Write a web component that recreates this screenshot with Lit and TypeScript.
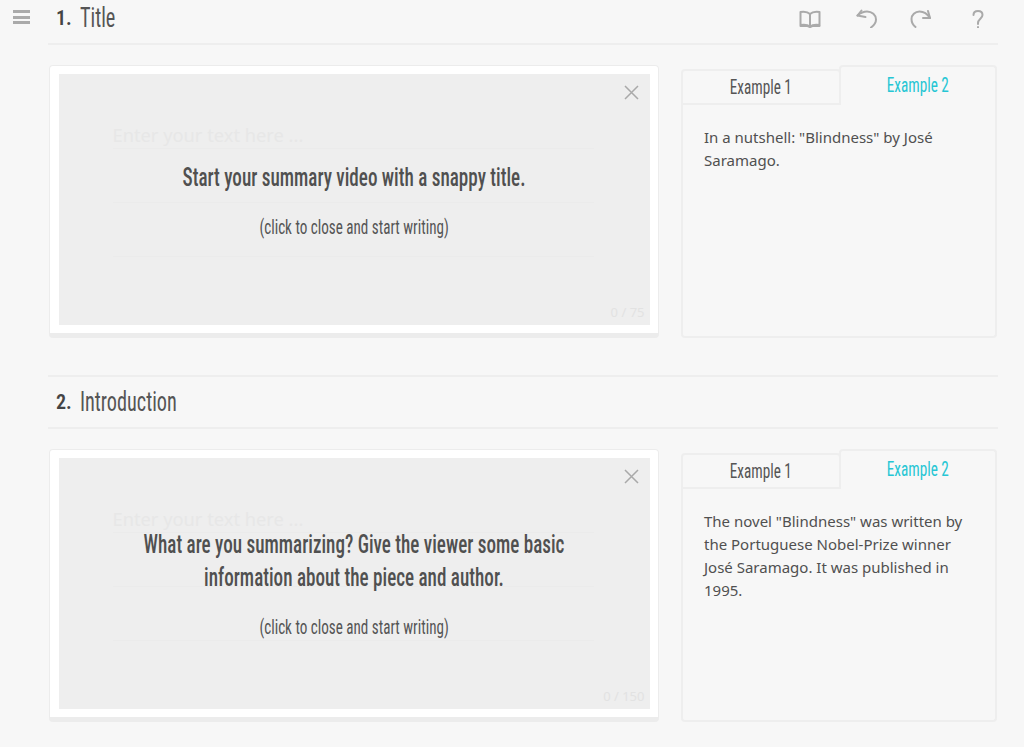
import { LitElement, html, css } from "lit";
import { customElement } from "lit/decorators.js";

const sections = [
  { n: "1.", title: "Title", prompt: "Start your summary video with a snappy title.", count: "0 / 75", example: 'In a nutshell: "Blindness" by José Saramago.' },
  { n: "2.", title: "Introduction", prompt: "What are you summarizing? Give the viewer some basic information about the piece and author.", count: "0 / 150", example: 'The novel "Blindness" was written by the Portuguese Nobel-Prize winner José Saramago. It was published in 1995.' },
];

@customElement("app-root")
export class AppRoot extends LitElement {
  static styles = css`
    :host { display: block; width: 1024px; height: 747px; overflow: hidden; background: #f7f7f7; color: #555; font-family: "Noto Sans", sans-serif; }
    .page { display: flex; }
    .side { width: 48px; flex: none; padding: 10px 0 0 13px; box-sizing: border-box; }
    .burger { display: flex; flex-direction: column; gap: 2.500px; width: 17px; }
    .burger i { display: block; height: 3px; background: #aaa; }
    .main { width: 950px; flex: none; }
    .sec + .sec { margin-top: 37px; }
    .head { display: flex; align-items: center; height: 36px; padding: 0 8px 7px; border-bottom: 2px solid #eee; }
    .sec + .sec .head { border-top: 2px solid #eee; padding-top: 7px; padding-bottom: 7px; height: 36px; }
    .num, .name { font-family: "Roboto Condensed", "Liberation Sans Narrow", sans-serif; }
    .num { font-size: 20px; font-weight: 600; width: 24px; color: #444; }
    .name { font-size: 27px; color: #555; transform: scaleX(.75); transform-origin: left center; }
    .tools { margin-left: auto; display: flex; align-items: center; padding-right: 6px; }
    .tools svg { display: block; height: 20px; fill: none; stroke: #aaa; stroke-width: 2; stroke-linecap: round; stroke-linejoin: round; }
    .tools svg.book { width: 22px; }
    .tools svg.arrow { width: 21px; margin-left: 35px; }
    .tools svg.arrow + svg.arrow { margin-left: 33px; }
    .tools svg.q { width: 12px; margin-left: 41px; }
    .row { display: flex; align-items: stretch; gap: 22px; margin: 20px 0 0 1px; height: 273px; }
    .card { width: 610px; flex: none; box-sizing: border-box; background: #fff; border: 1px solid #ececec; border-bottom-width: 5px; border-radius: 4px; padding: 8px 8.500px; }
    .box { position: relative; height: 251px; background: #eee; box-sizing: border-box; padding: 21px 56px 0 54px; overflow: hidden; }
    .ph { height: 54px; box-sizing: border-box; border-bottom: 1px solid #ebebeb; font-size: 18.300px; line-height: 22px; color: #e7e7e7; display: flex; align-items: flex-end; padding-bottom: 2px; }
    .x { position: absolute; top: 11px; right: 11px; width: 15px; height: 15px; stroke: #a9a9a9; stroke-width: 1.500; fill: none; }
    .count { position: absolute; right: 5px; bottom: 4px; font-size: 13px; color: #e2e2e2; }
    .overlay { position: absolute; inset: 0; padding: 5px 0 0; display: flex; flex-direction: column; justify-content: center; align-items: center; text-align: center; font-family: "Roboto Condensed", "Liberation Sans Narrow", sans-serif; }
    .prompt { flex: none; width: 620px; font-size: 25px; font-weight: 500; line-height: 33px; color: #505050; transform: scaleX(.765); }
    .sub { flex: none; font-size: 19.500px; line-height: 33px; margin-top: 17px; color: #555; transform: scaleX(.775); white-space: nowrap; }
    .ex { width: 316px; flex: none; display: flex; flex-direction: column; }
    .tabs { display: flex; height: 40px; flex: none; }
    .tab { box-sizing: border-box; display: flex; align-items: center; justify-content: center; }
    .tab span { font-family: "Roboto Condensed", "Liberation Sans Narrow", sans-serif; font-size: 19.500px; transform: scaleX(.78); }
    .tab.a { width: 160px; margin-top: 4px; border: 2px solid #eee; border-radius: 4px 4px 0 0; color: #555; }
    .tab.b { flex: 1; margin-left: -2px; color: #26c6d4; padding-bottom: 1px; border: 2px solid #eee; border-bottom: none; border-radius: 4px 4px 0 0; }
    .txt { flex: 1; padding: 21px 21px; font-size: 15px; line-height: 23px; color: #505050; border: 2px solid #eee; border-top: none; border-radius: 0 0 4px 4px; }
  `;

  render() {
    return html`<div class="page">
      <div class="side"><div class="burger"><i></i><i></i><i></i></div></div>
      <div class="main">
        ${sections.map((s, i) => html`<section class="sec">
          <div class="head">
            <span class="num">${s.n}</span><span class="name">${s.title}</span>
            ${i === 0 ? html`<div class="tools">
              <svg class="book" viewBox="0 0 22 20"><path d="M11 6C9 4 5 3.500 1.500 4v13c3.500-.5 7-.5 9.500 1.500 2.500-2 6-2 9.500-1.500V4c-3.500-.5-7.500 0-9.500 2zM11 6v12.500"/><path d="M1.500 18h7l2.500 1 2.500-1h7"/></svg>
              <svg class="arrow" viewBox="0 0 21 20"><path d="M5.500 2.500L1.500 7.500 9.500 9"/><path d="M1.500 7.500C5 4.500 8 3.500 11 3.500c5 0 9 3.500 9 8 0 3-1.500 5.500-5 8"/></svg>
              <svg class="arrow" viewBox="0 0 21 20"><path d="M18 3l2 7-7 0"/><path d="M5.500 19C3 17 1.500 14 1.500 11 1.500 7 5 3.500 9.500 3.500c4 0 8 2.500 10.500 6.500"/></svg>
              <svg class="q" viewBox="0 0 12 20"><path d="M1.500 7c0-2.500 2-4 4.500-4s4.500 1.500 4.500 4c0 3.500-4.500 4-4.500 8v1"/><path d="M6 19v.5"/></svg>
            </div>` : ""}
          </div>
          <div class="row">
            <div class="card"><div class="box">
              <div class="ph">Enter your text here ...</div><div class="ph"></div><div class="ph"></div>
              <svg class="x" viewBox="0 0 15 15"><path d="M1 1l13 13M14 1L1 14"/></svg>
              <span class="count">${s.count}</span>
              <div class="overlay"><div class="prompt">${s.prompt}</div><div class="sub">(click to close and start writing)</div></div>
            </div></div>
            <div class="ex">
              <div class="tabs"><div class="tab a"><span>Example 1</span></div><div class="tab b"><span>Example 2</span></div></div>
              <div class="txt">${s.example}</div>
            </div>
          </div>
        </section>`)}
      </div>
    </div>`;
  }
}
